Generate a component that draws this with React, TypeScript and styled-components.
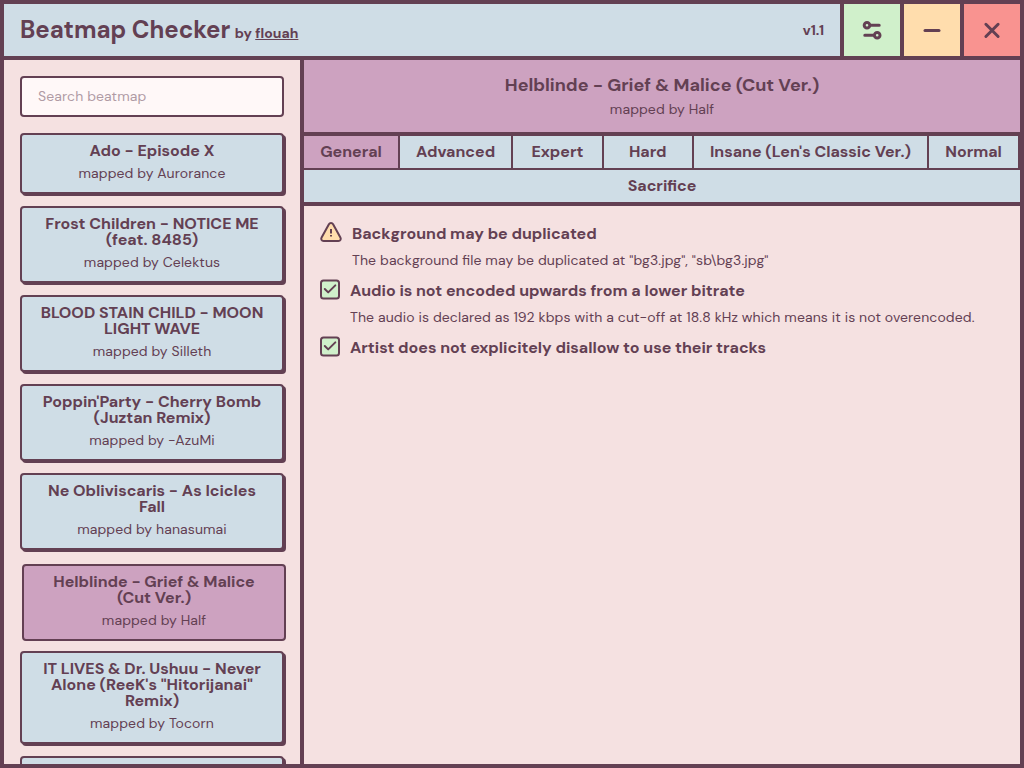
import React from "react";
import styled, { createGlobalStyle, css } from "styled-components";

const c = {
  ink: "#634053",
  blue: "#cfdde6",
  pink: "#f5e1e1",
  mauve: "#cda2c0",
  green: "#d0f0cb",
  orange: "#ffddad",
  red: "#f99390",
  field: "#fff8f8",
};

const GlobalStyle = createGlobalStyle`
  *, *::before, *::after { box-sizing: border-box; }
  body {
    margin: 0;
    overflow: hidden;
    color: ${c.ink};
    font-family: "DM Sans", Inter, sans-serif;
    font-size: 14px;
    font-weight: 400;
    letter-spacing: 0.107px;
    font-feature-settings: "liga" 1;
    line-height: 1.5;
  }
  h1, h2, h3, p { margin: 0; }
  button, input { font: inherit; color: inherit; letter-spacing: inherit; }
`;

const heading = css`
  font-weight: 700;
  letter-spacing: -0.01px;
`;

const Window = styled.div`
  display: flex;
  flex-direction: column;
  width: 1024px;
  height: 768px;
  border: 4px solid ${c.ink};
  background: ${c.pink};
`;

const TitleBar = styled.header`
  display: flex;
  flex: none;
  height: 56px;
  border-bottom: 4px solid ${c.ink};
  background: ${c.blue};
`;

const Brand = styled.div`
  display: flex;
  align-items: baseline;
  flex: 1;
  gap: 4.5px;
  padding: 8px 0 0 16px;
`;

const AppName = styled.h1`
  ${heading}
  font-size: 24px;
  letter-spacing: -0.03px;
  line-height: 36px;
`;

const Author = styled.span`
  ${heading}
  letter-spacing: 0.04px;
`;

const AuthorLink = styled.a`
  text-decoration: underline;
`;

const Version = styled.span`
  ${heading}
  align-self: center;
  margin-right: 16px;
`;

const WindowButton = styled.button<{ $fill: string }>`
  display: flex;
  align-items: center;
  justify-content: center;
  width: 60px;
  padding: 0;
  border: 0;
  border-left: 4px solid ${c.ink};
  background: ${(p) => p.$fill};
`;

const Glyph = styled.svg`
  display: block;
  flex: none;
  overflow: visible;
  fill: none;
  stroke: ${c.ink};
  stroke-linecap: round;
  stroke-linejoin: round;
`;

const Main = styled.div`
  display: flex;
  flex: 1;
  min-height: 0;
`;

const Sidebar = styled.aside`
  display: flex;
  flex-direction: column;
  flex: none;
  width: 300px;
  padding: 16px 16px 0;
  border-right: 4px solid ${c.ink};
  overflow: hidden;
`;

const Search = styled.input`
  flex: none;
  width: 100%;
  height: 41px;
  margin-bottom: 16px;
  padding: 0 16px 1px;
  border: 2px solid ${c.ink};
  border-radius: 4px;
  background: ${c.field};
  &::placeholder { color: ${c.ink}; opacity: 0.5; }
`;

const CardList = styled.div`
  display: flex;
  flex-direction: column;
  gap: 12px;
`;

const Card = styled.article<{ $active: boolean }>`
  flex: none;
  min-height: 61px;
  padding: 8px 16px;
  border: 2px solid ${c.ink};
  border-radius: 4px;
  background: ${c.blue};
  box-shadow: 2px 2px 0 ${c.ink};
  text-align: center;
  ${(p) =>
    p.$active &&
    css`
      transform: translate(2px, 2px);
      background: ${c.mauve};
      box-shadow: none;
    `}
`;

const CardTitle = styled.h3`
  ${heading}
  margin-bottom: 4px;
  font-size: 16px;
  line-height: 16px;
`;

const Mapper = styled.p`
  font-size: 14px;
  line-height: 21px;
`;

const Content = styled.main`
  display: flex;
  flex-direction: column;
  flex: 1;
  min-width: 0;
`;

const SongHeader = styled.div`
  height: 76px;
  padding-top: 12px;
  border-bottom: 4px solid ${c.ink};
  background: ${c.mauve};
  text-align: center;
`;

const SongTitle = styled.h2`
  ${heading}
  font-size: 18px;
  line-height: 27px;
`;

const Tabs = styled.nav`
  display: flex;
  flex-wrap: wrap;
  border-bottom: 2px solid ${c.ink};
`;

const Tab = styled.button<{ $active: boolean; $last: boolean }>`
  ${heading}
  flex: 1 0 auto;
  min-width: 90.3px;
  height: 34px;
  padding: 0 16px;
  border: 0;
  border-bottom: 2px solid ${c.ink};
  border-right: ${(p) => (p.$last ? 0 : 2)}px solid ${c.ink};
  background: ${(p) => (p.$active ? c.mauve : c.blue)};
  font-size: 16px;
  line-height: 24px;
`;

const Checks = styled.div`
  display: flex;
  flex-direction: column;
  gap: 6px;
  padding: 16px;
`;

const Check = styled.section`
  display: flex;
  align-items: flex-start;
`;

const IconSlot = styled.span<{ $wide: boolean }>`
  flex: none;
  width: ${(p) => (p.$wide ? 32 : 30)}px;
`;

const CheckTitle = styled.h3`
  ${heading}
  font-size: 16px;
  line-height: 24px;
`;

const CheckDetail = styled.p`
  padding-top: 1px;
  line-height: 26px;
`;

const CheckText = styled.div`
  flex: 1;
`;

const beatmaps = [
  ["Ado - Episode X", "Aurorance"],
  ["Frost Children - NOTICE ME (feat. 8485)", "Celektus"],
  ["BLOOD STAIN CHILD - MOON LIGHT WAVE", "Silleth"],
  ["Poppin'Party - Cherry Bomb (Juztan Remix)", "-AzuMi"],
  ["Ne Obliviscaris - As Icicles Fall", "hanasumai"],
  ["Helblinde - Grief & Malice (Cut Ver.)", "Half"],
  ["IT LIVES & Dr. Ushuu - Never Alone (ReeK's \"Hitorijanai\" Remix)", "Tocorn"],
  ["", ""],
];

const tabs = ["General", "Advanced", "Expert", "Hard", "Insane (Len's Classic Ver.)", "Normal", "Sacrifice"];

const checks = [
  {
    warn: true,
    title: "Background may be duplicated",
    detail: 'The background file may be duplicated at "bg3.jpg", "sb\\bg3.jpg"',
  },
  {
    warn: false,
    title: "Audio is not encoded upwards from a lower bitrate",
    detail: "The audio is declared as 192 kbps with a cut-off at 18.8 kHz which means it is not overencoded.",
  },
  { warn: false, title: "Artist does not explicitely disallow to use their tracks", detail: "" },
];

const WarningIcon = () => (
  <Glyph width="22" height="22" viewBox="0 0 22 22" strokeWidth="2">
    <path fill={c.orange} d="M8.9 2.3a2.4 2.4 0 0 1 4.2 0l7.3 13.1c.9 1.8 0 3.6-2 3.6H3.6c-2 0-2.9-1.8-2-3.6Z" />
    <path strokeLinecap="butt" d="M11 7v4.4M11 13v1.6" />
  </Glyph>
);

const PassIcon = () => (
  <Glyph width="20" height="21" viewBox="0 0 20 21" strokeWidth="2">
    <rect x="1" y="1.5" width="18" height="18" rx="2.5" fill={c.green} />
    <path d="m4.8 10 3.4 3.4 7.1-7" />
  </Glyph>
);

export default function App() {
  return (
    <Window>
      <GlobalStyle />
      <TitleBar>
        <Brand>
          <AppName>Beatmap Checker</AppName>
          <Author>
            by <AuthorLink>flouah</AuthorLink>
          </Author>
        </Brand>
        <Version>v1.1</Version>
        <WindowButton $fill={c.green} aria-label="Settings">
          <Glyph width="20" height="20" viewBox="0 0 20 20" strokeWidth="3">
            <circle cx="5" cy="5.3" r="2.8" />
            <path d="M8.5 5.3h8.7M2.8 15.3h8.7" />
            <circle cx="15.2" cy="15.3" r="2.8" />
          </Glyph>
        </WindowButton>
        <WindowButton $fill={c.orange} aria-label="Minimize">
          <Glyph width="20" height="20" viewBox="0 0 20 20" strokeWidth="3">
            <path d="M3 10.5h14" />
          </Glyph>
        </WindowButton>
        <WindowButton $fill={c.red} aria-label="Close">
          <Glyph width="20" height="20" viewBox="0 0 20 20" strokeWidth="3">
            <path d="m3.9 4.3 12.2 12.2M16.1 4.3 3.9 16.5" />
          </Glyph>
        </WindowButton>
      </TitleBar>
      <Main>
        <Sidebar>
          <Search placeholder="Search beatmap" />
          <CardList>
            {beatmaps.map(([title, mapper], i) => (
              <Card key={i} $active={i === 5}>
                <CardTitle>{title}</CardTitle>
                {mapper && <Mapper>mapped by {mapper}</Mapper>}
              </Card>
            ))}
          </CardList>
        </Sidebar>
        <Content>
          <SongHeader>
            <SongTitle>Helblinde - Grief & Malice (Cut Ver.)</SongTitle>
            <Mapper>mapped by Half</Mapper>
          </SongHeader>
          <Tabs>
            {tabs.map((t, i) => (
              <Tab key={t} $active={i === 0} $last={i === tabs.length - 1}>
                {t}
              </Tab>
            ))}
          </Tabs>
          <Checks>
            {checks.map((k) => (
              <Check key={k.title}>
                <IconSlot $wide={k.warn}>{k.warn ? <WarningIcon /> : <PassIcon />}</IconSlot>
                <CheckText>
                  <CheckTitle>{k.title}</CheckTitle>
                  {k.detail && <CheckDetail>{k.detail}</CheckDetail>}
                </CheckText>
              </Check>
            ))}
          </Checks>
        </Content>
      </Main>
    </Window>
  );
}
